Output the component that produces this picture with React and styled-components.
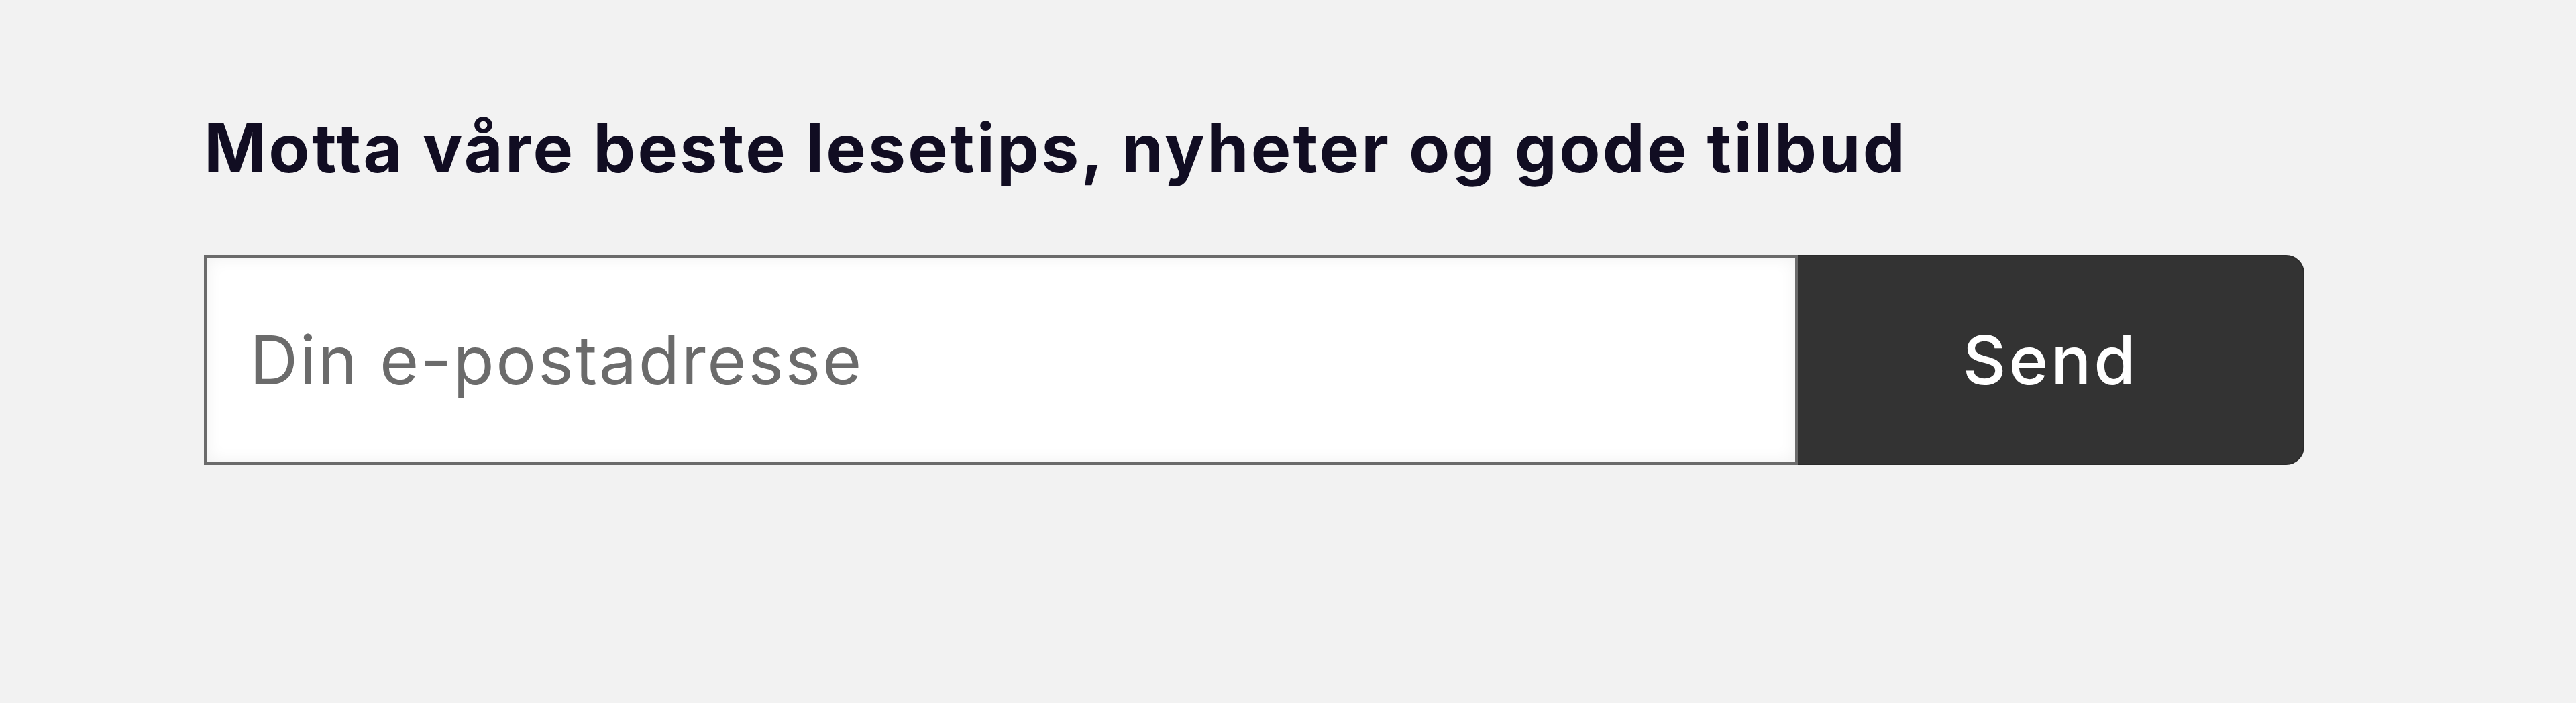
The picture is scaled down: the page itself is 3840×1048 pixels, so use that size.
import React from 'react'
import styled, { createGlobalStyle } from 'styled-components'

const GlobalStyle = createGlobalStyle`
  html, body {
    margin: 0;
    padding: 0;
    background: #f2f2f2;
  }
  body {
    font-family: Inter, "Noto Sans", sans-serif;
  }
`

const Section = styled.section`
  padding: 171px 0 0 304px;
  min-height: 1048px;
  box-sizing: border-box;
`

const Title = styled.h2`
  margin: 0;
  font-size: 100px;
  line-height: 1;
  font-weight: 700;
  color: #110d22;
  letter-spacing: 3.2px;
`

const Form = styled.form`
  display: flex;
  margin-top: 109px;
  height: 313px;
`

const Input = styled.input`
  width: 2376px;
  height: 100%;
  box-sizing: border-box;
  border: 5px solid #6b6b6b;
  border-right-width: 4px;
  background: #fff;
  box-shadow: inset 0 0 24px rgba(0, 0, 0, 0.06);
  padding: 0 0 0 63px;
  font-family: Inter, "Noto Sans", sans-serif;
  font-size: 100px;
  font-weight: 400;
  letter-spacing: 2.6px;
  color: #222;
  outline: none;
  &::placeholder {
    color: #6b6b6b;
  }
`

const Button = styled.button`
  width: 755px;
  height: 100%;
  box-sizing: border-box;
  border: 2px solid #2b2b2b;
  border-left: none;
  border-radius: 0 27px 27px 0;
  background: #333333;
  color: #fff;
  font-family: Inter, "Noto Sans", sans-serif;
  font-size: 100px;
  font-weight: 500;
  letter-spacing: 4px;
  cursor: pointer;
`

function App() {
  return (
    <>
      <GlobalStyle />
      <Section>
        <Title>Motta våre beste lesetips, nyheter og gode tilbud</Title>
        <Form onSubmit={e => e.preventDefault()}>
          <Input type="email" placeholder="Din e-postadresse" />
          <Button type="submit">Send</Button>
        </Form>
      </Section>
    </>
  )
}

export default App
